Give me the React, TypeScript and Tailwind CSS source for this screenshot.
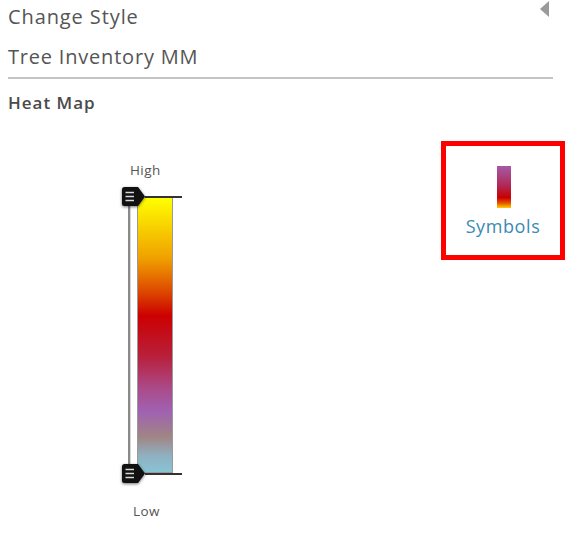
const Handle = () => (
  <svg width="27" height="23" viewBox="0 0 27 23" className="drop-shadow-[0_1px_1.5px_rgba(0,0,0,0.55)]">
    <path d="M3.5 2 H17 L24 11.5 L17 21 H3.5 Q1 21 1 18.5 V4.5 Q1 2 3.5 2 Z" fill="#111" />
    <path d="M4.5 7.5 H13 M4.5 11.5 H13 M4.5 15.5 H13" stroke="#d8d8d8" strokeWidth="1.7" />
  </svg>
);

const HeatSlider = () => (
  <div className="ml-[122px] w-[62px] flex flex-col text-[13.5px] tracking-[0.4px] text-[#555]">
    <div className="pl-[8px] leading-[16px] h-[25px]">High</div>
    <div className="relative h-[296px]">
      <div className="flex pt-[10px]">
        <div className="ml-[6px] w-[3px] h-[276px] bg-[#8a8a8a] border-r border-[#d6d6d6]" />
        <div className="ml-[6px] w-[36px] h-[276px] border border-[#9a9a9a] bg-[linear-gradient(to_bottom,#ffff00_0%,#f0a000_22%,#dd4a00_34%,#cc0000_43%,#b8203c_58%,#aa4c8c_70%,#a062b2_78%,#a08484_87%,#90b0c0_94%,#88c4d4_100%)]" />
      </div>
      <div className="absolute left-[23px] top-[9px] w-[37px] h-[2px] bg-[#333]" />
      <div className="absolute left-[23px] top-[286px] w-[37px] h-[2px] bg-[#333]" />
      <div className="absolute left-[-1px] top-[-2px]">
        <Handle />
      </div>
      <div className="absolute left-[-1px] top-[275px]">
        <Handle />
      </div>
    </div>
    <div className="pl-[11px] mt-[20px] leading-[16px]">Low</div>
  </div>
);

export default function App() {
  return (
    <div className="w-[568px] h-[542px] bg-white overflow-hidden pt-[2px] font-['Open_Sans','Lato',sans-serif] text-[#555]">
      <div className="flex items-start justify-between pl-[8px] pr-[19px]">
        <div className="text-[20px] tracking-[0.9px] leading-[30px]">Change Style</div>
        <div className="mt-[-1px] w-0 h-0 border-y-[8px] border-y-transparent border-r-[9px] border-r-[#9a9a9a]" />
      </div>
      <div className="mx-[8px] mr-[15px] pt-[10px] pb-[5px] border-b-2 border-[#c4c4c4]">
        <div className="text-[20px] tracking-[0.8px] leading-[30px]">Tree Inventory MM</div>
      </div>
      <div className="pl-[8px] pt-[13px] text-[17px] tracking-[1px] leading-[22px] font-semibold text-[#4a4a4a]">Heat Map</div>
      <div className="flex items-start">
        <div className="mt-[48px]">
          <HeatSlider />
        </div>
        <div className="ml-auto mr-[3px] mt-[27px] w-[124px] h-[119px] border-[5px] border-[#ff0000] flex flex-col items-center pt-[20px]">
          <div className="ml-[2px] w-[14px] h-[42px] bg-[linear-gradient(to_bottom,#a65aa8_0%,#b02a5a_45%,#c80000_75%,#e85000_88%,#ffd000_100%)]" />
          <div className="mt-[6px] text-[18px] tracking-[0.6px] leading-[24px] text-[#3a8ab4]">Symbols</div>
        </div>
      </div>
    </div>
  );
}
